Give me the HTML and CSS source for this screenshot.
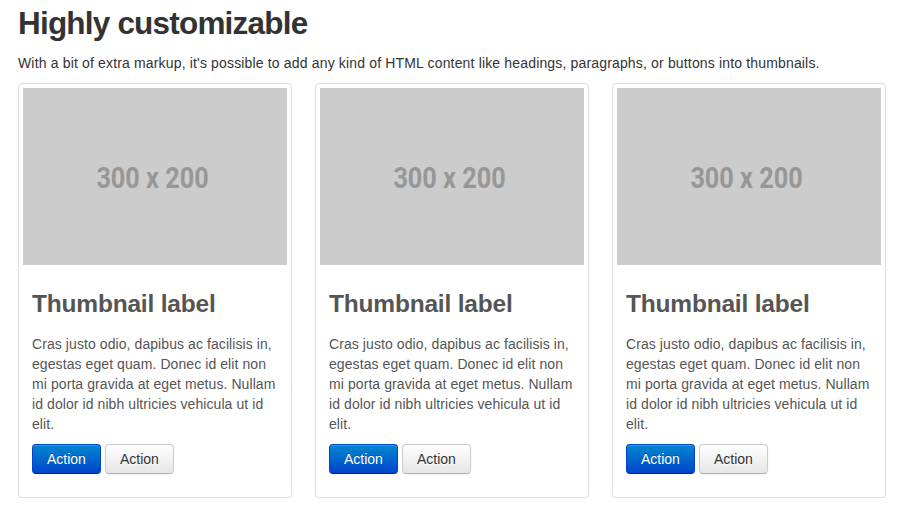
FILE: index.html
```html
<!DOCTYPE html>
<html lang="en">
<head>
<meta charset="utf-8">
<title>Highly customizable</title>
<link rel="stylesheet" href="styles.css">
</head>
<body>
<div class="page">
  <h2 class="title">Highly customizable</h2>
  <p class="lead">With a bit of extra markup, it's possible to add any kind of HTML content like headings, paragraphs, or buttons into thumbnails.</p>
  <ul class="thumbnails">
    <li class="thumbnail">
      <div class="placeholder"><span class="ph-text">300 x 200</span></div>
      <div class="caption">
        <h3 class="caption-title">Thumbnail label</h3>
        <p class="caption-text">Cras justo odio, dapibus ac facilisis in, egestas eget quam. Donec id elit non mi porta gravida at eget metus. Nullam id dolor id nibh ultricies vehicula ut id elit.</p>
        <p class="actions"><a class="btn btn-primary" href="#">Action</a> <a class="btn" href="#">Action</a></p>
      </div>
    </li>
    <li class="thumbnail">
      <div class="placeholder"><span class="ph-text">300 x 200</span></div>
      <div class="caption">
        <h3 class="caption-title">Thumbnail label</h3>
        <p class="caption-text">Cras justo odio, dapibus ac facilisis in, egestas eget quam. Donec id elit non mi porta gravida at eget metus. Nullam id dolor id nibh ultricies vehicula ut id elit.</p>
        <p class="actions"><a class="btn btn-primary" href="#">Action</a> <a class="btn" href="#">Action</a></p>
      </div>
    </li>
    <li class="thumbnail">
      <div class="placeholder"><span class="ph-text">300 x 200</span></div>
      <div class="caption">
        <h3 class="caption-title">Thumbnail label</h3>
        <p class="caption-text">Cras justo odio, dapibus ac facilisis in, egestas eget quam. Donec id elit non mi porta gravida at eget metus. Nullam id dolor id nibh ultricies vehicula ut id elit.</p>
        <p class="actions"><a class="btn btn-primary" href="#">Action</a> <a class="btn" href="#">Action</a></p>
      </div>
    </li>
  </ul>
</div>
</body>
</html>
```

FILE: styles.css
```css
html, body {
  margin: 0;
  padding: 0;
  background: #fff;
}
body {
  font-family: "Liberation Sans", Arial, sans-serif;
  font-size: 14px;
  line-height: 20px;
  color: #333;
}
.page {
  padding: 3px 15px 0 18px;
}
.title {
  margin: 0 0 10px;
  font-size: 31.5px;
  line-height: 40px;
  font-weight: bold;
  letter-spacing: -0.8px;
  color: #333;
}
.lead {
  margin: 0 0 10px;
  font-size: 14px;
  line-height: 20px;
  letter-spacing: 0.16px;
  white-space: nowrap;
}
.thumbnails {
  list-style: none;
  margin: 0;
  padding: 0;
  display: grid;
  grid-template-columns: repeat(3, 274px);
  column-gap: 23px;
}
.thumbnail {
  box-sizing: border-box;
  padding: 4px;
  border: 1px solid #ddd;
  border-radius: 4px;
  box-shadow: 0 1px 3px rgba(0, 0, 0, 0.055);
}
.placeholder {
  height: 177px;
  background: #cccccc;
  display: flex;
  align-items: center;
  justify-content: center;
}
.ph-text {
  display: inline-block;
  font-family: Roboto, "Liberation Sans", sans-serif;
  font-weight: bold;
  font-size: 29px;
  line-height: 30px;
  color: #979797;
  transform: scaleX(0.87);
  margin-left: -5px;
  margin-top: 3px;
}
.caption {
  padding: 9px;
  color: #555;
}
.caption-title {
  margin: 10px 0;
  font-size: 24.5px;
  line-height: 40px;
  font-weight: bold;
  letter-spacing: -0.2px;
  color: #555;
}
.caption-text {
  margin: 0 0 10px;
  letter-spacing: 0.08px;
}
.actions {
  margin: 0 0 10px;
  display: flex;
  gap: 4px;
}
.btn {
  display: inline-block;
  padding: 4px 14px;
  font-size: 14px;
  line-height: 20px;
  color: #333;
  text-decoration: none;
  text-align: center;
  text-shadow: 0 1px 1px rgba(255, 255, 255, 0.75);
  background-image: linear-gradient(to bottom, #ffffff, #e6e6e6);
  border: 1px solid #cccccc;
  border-bottom-color: #b3b3b3;
  border-radius: 4px;
  box-shadow: inset 0 1px 0 rgba(255, 255, 255, 0.2), 0 1px 2px rgba(0, 0, 0, 0.05);
}
.btn-primary {
  color: #fff;
  text-shadow: 0 -1px 0 rgba(0, 0, 0, 0.25);
  background-image: linear-gradient(to bottom, #0088cc, #0044cc);
  border-color: #0044cc #0044cc #002a80;
}
```
